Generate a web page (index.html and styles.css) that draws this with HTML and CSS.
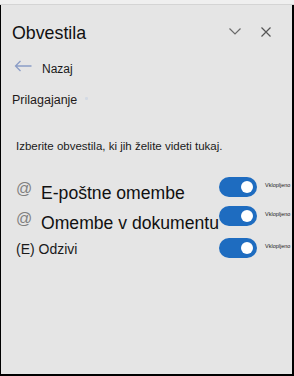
FILE: index.html
```html
<!DOCTYPE html>
<html lang="sl">
<head>
<meta charset="utf-8">
<title>Obvestila</title>
<link rel="stylesheet" href="styles.css">
</head>
<body>
<div class="topstrip"></div>
<div class="panel">
  <header class="head">
    <h1 class="title">Obvestila</h1>
    <div class="actions">
      <svg class="chev" width="12" height="7" viewBox="0 0 12 7"><path d="M0.5 0.5 L6 6 L11.5 0.5" fill="none" stroke="#6a6a6a" stroke-width="1.2"/></svg>
      <svg class="close" width="10" height="10" viewBox="0 0 10 10"><path d="M0.5 0.5 L9.5 9.5 M9.5 0.5 L0.5 9.5" fill="none" stroke="#555" stroke-width="1.2"/></svg>
    </div>
  </header>
  <div class="back">
    <svg class="arrow" width="18" height="12" viewBox="0 0 18 12"><path d="M1.5 6 H17.5 M6.5 1 L1.5 6 L6.5 11" fill="none" stroke="#8b9dc6" stroke-width="1.3"/></svg>
    <span class="back-text">Nazaj</span>
  </div>
  <div class="section">Prilagajanje<span class="dot"></span></div>
  <p class="hint">Izberite obvestila, ki jih želite videti tukaj.</p>
  <div class="rows">
    <div class="row row-a">
      <span class="label big"><span class="at">@</span>E-poštne omembe</span>
      <span class="toggle"><span class="knob"></span></span>
      <span class="state">Vklopljeno</span>
    </div>
    <div class="row row-b">
      <span class="label big"><span class="at">@</span>Omembe v dokumentu</span>
      <span class="toggle"><span class="knob"></span></span>
      <span class="state">Vklopljeno</span>
    </div>
    <div class="row row-c">
      <span class="label small">(E) Odzivi</span>
      <span class="toggle"><span class="knob"></span></span>
      <span class="state">Vklopljeno</span>
    </div>
  </div>
</div>
</body>
</html>
```
FILE: styles.css
```css
html, body {
  margin: 0;
  padding: 0;
}
body {
  width: 294px;
  height: 376px;
  display: flex;
  flex-direction: column;
  font-family: "Liberation Sans", Arial, sans-serif;
  color: #1a1a1a;
  background: #efefef;
  overflow: hidden;
}
.topstrip {
  height: 4px;
  background: #efefef;
  border-bottom: 1px solid #d4d4d4;
  flex: none;
}
.panel {
  flex: 1;
  background: #e5e5e5;
  border-left: 1px solid #000;
  border-right: 2px solid #000;
  border-bottom: 2px solid #000;
  padding-left: 11px;
  padding-right: 21px;
  display: flex;
  flex-direction: column;
}
.head {
  display: flex;
  align-items: flex-start;
  padding-top: 17px;
}
.title {
  flex: 1;
  margin: 0;
  font-size: 17.8px;
  line-height: 22px;
  font-weight: normal;
  color: #111;
}
.actions {
  display: flex;
  align-items: flex-start;
  gap: 20px;
}
.chev {
  margin-top: 6px;
  display: block;
}
.close {
  margin-top: 5px;
  display: block;
}
.back {
  margin-top: 17px;
  display: flex;
  align-items: flex-start;
}
.arrow {
  display: block;
  margin-left: 2px;
  margin-top: -1px;
  margin-right: 10px;
}
.back-text {
  font-size: 12px;
  line-height: 16px;
  color: #1a1a1a;
}
.section {
  margin-top: 15px;
  font-size: 12.5px;
  line-height: 16px;
  color: #1f1a1a;
  display: flex;
  align-items: flex-start;
}
.dot {
  width: 3px;
  height: 3px;
  margin-left: 8px;
  margin-top: 5px;
  background: #d3dae4;
  border-radius: 1px;
}
.hint {
  margin: 31px 0 0 4px;
  font-size: 11.5px;
  line-height: 14px;
  color: #1a1a1a;
}
.rows {
  margin-top: 24px;
  padding-left: 4px;
  display: flex;
  flex-direction: column;
}
.row {
  display: grid;
  grid-template-columns: 203px 38px auto;
  align-items: start;
}
.row-a { height: 29px; }
.row-b { height: 32px; }
.row-c { height: 22px; }
.label {
  white-space: nowrap;
  color: #111;
}
.label.big {
  font-size: 17.6px;
  line-height: 20px;
  margin-top: 2px;
}
.row-b .label.big {
  margin-top: 3px;
}
.label.small {
  font-size: 14px;
  line-height: 16px;
  margin-top: 3px;
  color: #1a1a1a;
}
.at {
  display: inline-block;
  width: 25px;
  font-size: 16px;
  color: #808080;
  vertical-align: 5px;
}
.toggle {
  position: relative;
  width: 38px;
  height: 20px;
  border-radius: 10px;
  background: #1e6cc0;
  display: flex;
  align-items: center;
  justify-content: flex-end;
  padding-right: 4px;
  box-sizing: border-box;
}
.knob {
  width: 12px;
  height: 12px;
  border-radius: 50%;
  background: #fff;
}
.state {
  margin-left: 8px;
  margin-top: 5px;
  font-size: 5.5px;
  line-height: 7px;
  color: #222;
  white-space: nowrap;
}
```
